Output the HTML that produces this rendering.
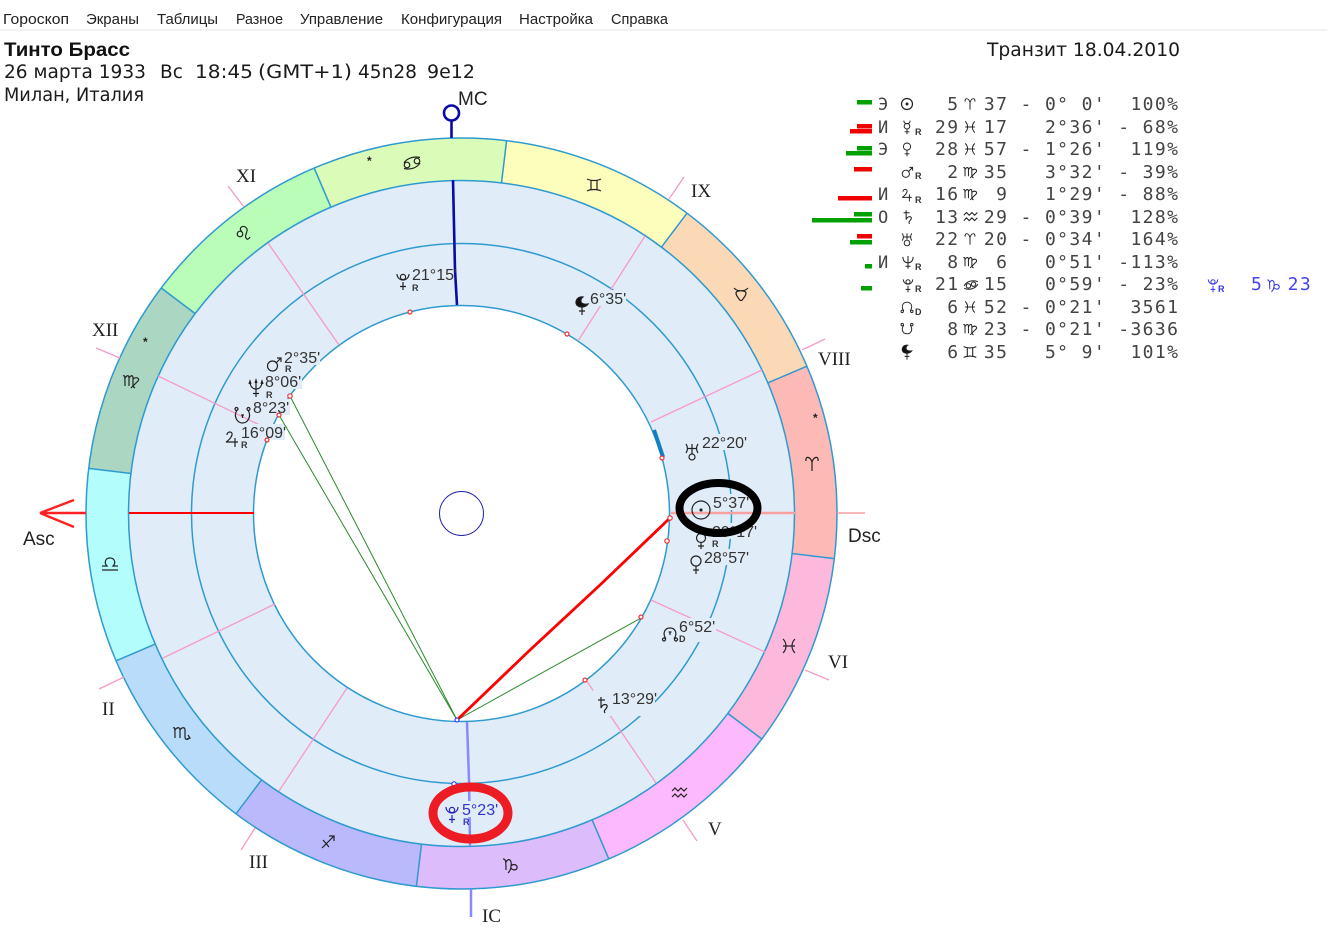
<!DOCTYPE html>
<html lang="ru"><head><meta charset="utf-8"><title>Тинто Брасс</title>
<style>
html,body{margin:0;padding:0;background:#fff;width:1335px;height:932px;overflow:hidden}
svg{display:block;position:absolute;left:0;top:0}
.m{font:14.5px "Liberation Sans",sans-serif;fill:#222}
.h{font:18.5px "DejaVu Sans",sans-serif;fill:#1a1a1a}
.s{font:19px "Liberation Serif",serif;fill:#222}
.a{font:19px "Liberation Sans",sans-serif;fill:#222}
.d{font:16px "Liberation Sans",sans-serif;fill:#333}
.t{font:18px "DejaVu Sans Mono",monospace;fill:#444;letter-spacing:1.38px;white-space:pre}
.g{fill:none;stroke:#222;stroke-width:1.2}
.r{font:bold 9px "Liberation Sans",sans-serif;fill:#333}
.c{fill:none;stroke:#2f9ad0;stroke-width:1.5}
.pk{stroke:#f79ac8;stroke-width:1.3}
.sec{fill:none;stroke-width:42.5;stroke-dasharray:185.49 2040}
</style></head><body>
<svg width="1335" height="932" viewBox="0 0 1335 932" xmlns="http://www.w3.org/2000/svg">
<rect x="0" y="29" width="1335" height="2" fill="#f2f2f2"/>
<g class="m">
<text x="3" y="24" textLength="66" lengthAdjust="spacingAndGlyphs">Гороскоп</text><text x="86" y="24" textLength="53" lengthAdjust="spacingAndGlyphs">Экраны</text><text x="157" y="24" textLength="61" lengthAdjust="spacingAndGlyphs">Таблицы</text><text x="236" y="24" textLength="47" lengthAdjust="spacingAndGlyphs">Разное</text><text x="300" y="24" textLength="83" lengthAdjust="spacingAndGlyphs">Управление</text><text x="401" y="24" textLength="101" lengthAdjust="spacingAndGlyphs">Конфигурация</text><text x="519" y="24" textLength="74" lengthAdjust="spacingAndGlyphs">Настройка</text><text x="611" y="24" textLength="57" lengthAdjust="spacingAndGlyphs">Справка</text>
</g>
<text x="4" y="56" textLength="126" lengthAdjust="spacingAndGlyphs" style="font:bold 19.5px 'Liberation Sans',sans-serif;fill:#111">Тинто Брасс</text>
<g class="h">
<text x="4" y="78" textLength="142" lengthAdjust="spacingAndGlyphs">26 марта 1933</text>
<text x="160" y="78">Вс</text>
<text x="195" y="78" textLength="58" lengthAdjust="spacingAndGlyphs">18:45</text>
<text x="258" y="78" textLength="94" lengthAdjust="spacingAndGlyphs">(GMT+1)</text>
<text x="358" y="78" textLength="59" lengthAdjust="spacingAndGlyphs">45n28</text>
<text x="427" y="78" textLength="48" lengthAdjust="spacingAndGlyphs">9e12</text>
<text x="4" y="101" textLength="140" lengthAdjust="spacingAndGlyphs">Милан, Италия</text>
<text x="987" y="56" textLength="193" lengthAdjust="spacingAndGlyphs">Транзит 18.04.2010</text>
</g>

<!-- wheel -->
<circle cx="461.5" cy="513.5" r="333" fill="#e0ecf8"/>
<g>
<circle class="sec" cx="461.5" cy="513.5" r="354.25" stroke="#fdb9b6" transform="rotate(336.9 461.5 513.5)"/>
<circle class="sec" cx="461.5" cy="513.5" r="354.25" stroke="#fdb9dc" transform="rotate(6.9 461.5 513.5)"/>
<circle class="sec" cx="461.5" cy="513.5" r="354.25" stroke="#fcb9fb" transform="rotate(36.9 461.5 513.5)"/>
<circle class="sec" cx="461.5" cy="513.5" r="354.25" stroke="#dcbcfb" transform="rotate(66.9 461.5 513.5)"/>
<circle class="sec" cx="461.5" cy="513.5" r="354.25" stroke="#b9b9fb" transform="rotate(96.9 461.5 513.5)"/>
<circle class="sec" cx="461.5" cy="513.5" r="354.25" stroke="#b9dcfb" transform="rotate(126.9 461.5 513.5)"/>
<circle class="sec" cx="461.5" cy="513.5" r="354.25" stroke="#b4fdfd" transform="rotate(156.9 461.5 513.5)"/>
<circle class="sec" cx="461.5" cy="513.5" r="354.25" stroke="#aad6c2" transform="rotate(186.9 461.5 513.5)"/>
<circle class="sec" cx="461.5" cy="513.5" r="354.25" stroke="#b9fdb9" transform="rotate(216.9 461.5 513.5)"/>
<circle class="sec" cx="461.5" cy="513.5" r="354.25" stroke="#dbfcb9" transform="rotate(246.9 461.5 513.5)"/>
<circle class="sec" cx="461.5" cy="513.5" r="354.25" stroke="#fdfdbc" transform="rotate(276.9 461.5 513.5)"/>
<circle class="sec" cx="461.5" cy="513.5" r="354.25" stroke="#fcd9b6" transform="rotate(306.9 461.5 513.5)"/>
</g>
<g stroke="#2f9ad0" stroke-width="1.5">
<line x1="834.3" y1="558.6" x2="792.1" y2="553.5"/>
<line x1="761.8" y1="739" x2="727.8" y2="713.4"/>
<line x1="608.8" y1="858.9" x2="592.1" y2="819.8"/>
<line x1="416.4" y1="886.3" x2="421.5" y2="844.1"/>
<line x1="236" y1="813.8" x2="261.6" y2="779.8"/>
<line x1="116.1" y1="660.8" x2="155.2" y2="644.1"/>
<line x1="88.7" y1="468.4" x2="130.9" y2="473.5"/>
<line x1="161.2" y1="288" x2="195.2" y2="313.6"/>
<line x1="314.2" y1="168.1" x2="330.9" y2="207.2"/>
<line x1="506.6" y1="140.7" x2="501.5" y2="182.9"/>
<line x1="687" y1="213.2" x2="661.4" y2="247.2"/>
<line x1="806.9" y1="366.2" x2="767.8" y2="382.9"/>
</g>
<circle class="c" cx="461.5" cy="513.5" r="375.5"/>
<circle class="c" cx="461.5" cy="513.5" r="333"/>
<circle class="c" cx="461.5" cy="513.5" r="270"/>
<circle cx="461.5" cy="513.5" r="208" fill="#fff" stroke="#2f9ad0" stroke-width="1.5"/>
<circle cx="461.5" cy="513.5" r="22" fill="none" stroke="#2222aa" stroke-width="1"/>

<!-- house cusps -->
<g class="pk">
<line x1="339" y1="345" x2="268" y2="243"/><line x1="244" y1="207" x2="228" y2="186"/>
<line x1="266" y1="428" x2="158" y2="376"/><line x1="120" y1="358" x2="96" y2="348"/>
<line x1="275" y1="604" x2="163" y2="658"/><line x1="124" y1="677" x2="99" y2="689"/>
<line x1="347" y1="688" x2="279" y2="791"/><line x1="255" y1="828" x2="241" y2="850"/>
<line x1="586" y1="680" x2="656" y2="783"/><line x1="683" y1="820" x2="697" y2="841"/>
<line x1="651" y1="600" x2="765" y2="652"/><line x1="805" y1="670" x2="829" y2="680"/>
<line x1="651" y1="422" x2="762" y2="370"/><line x1="802" y1="350" x2="825" y2="339"/>
<line x1="578" y1="341" x2="645" y2="236"/><line x1="669" y1="199" x2="684" y2="177"/>
</g>

<!-- label backgrounds hide rings and cusps beneath the text -->
<g fill="#e0ecf8">
<rect x="412" y="266" width="44" height="16"/><rect x="590" y="290" width="36" height="16"/>
<rect x="284" y="349" width="36" height="16"/><rect x="265" y="373" width="37" height="16"/>
<rect x="253" y="399" width="37" height="16"/><rect x="241" y="424" width="44" height="16"/>
<rect x="702" y="434" width="44" height="16"/><rect x="713" y="494" width="36" height="16"/>
<rect x="712" y="523" width="44" height="16"/><rect x="704" y="549" width="44" height="16"/>
<rect x="661" y="618" width="55" height="24"/><rect x="593" y="690" width="62" height="26"/>
</g>

<line x1="129" y1="513" x2="254" y2="513" stroke="#f00" stroke-width="2"/>
<path d="M86 513H40M40 513L74 500M40 513L74 527" fill="none" stroke="#f22" stroke-width="2.4"/>
<line x1="671" y1="513" x2="795" y2="513" stroke="#f9a0a0" stroke-width="2.5"/>
<line x1="837" y1="513" x2="865" y2="513" stroke="#f9a0a0" stroke-width="1.5"/>
<path d="M453 180L455 270L457 305" fill="none" stroke="#0a0aa8" stroke-width="2.6"/>
<path d="M451.5 138V121" fill="none" stroke="#0a0aa8" stroke-width="2.6"/>
<circle cx="451.5" cy="113" r="7.5" fill="#fff" stroke="#0a0aa8" stroke-width="2.6"/>
<path d="M467 722L469 780L470 846" fill="none" stroke="#8888ff" stroke-width="2.5"/>
<rect x="462" y="801" width="36" height="16" fill="#e0ecf8"/>
<line x1="471" y1="889" x2="471" y2="917" stroke="#8888ff" stroke-width="2.5"/>
<g fill="none">
<line x1="457" y1="720" x2="290" y2="396" stroke="#2a8a2a" stroke-width="1"/>
<line x1="457" y1="720" x2="279" y2="415" stroke="#2a8a2a" stroke-width="1"/>
<line x1="457" y1="720" x2="641" y2="618" stroke="#2a8a2a" stroke-width="1"/>
<path d="M458 719L530 650L600 585L670 518" stroke="#f00" stroke-width="2.8"/>
<path d="M654 430L663 457" stroke="#1080c0" stroke-width="4"/>
<g stroke="#f03030" stroke-width="1.2" fill="#fff">
<circle cx="410" cy="312" r="2"/><circle cx="567" cy="334" r="2"/><circle cx="290" cy="396" r="2.2"/><circle cx="279" cy="415" r="2"/><circle cx="267" cy="440" r="2"/><circle cx="662" cy="458" r="2"/><circle cx="670" cy="518" r="2.2"/><circle cx="667" cy="541" r="2.2"/><circle cx="641" cy="617" r="2"/><circle cx="585" cy="680" r="2"/>
</g>
<circle cx="457" cy="720" r="2" stroke="#22f" fill="#fff"/>
<circle cx="454" cy="784" r="2.2" stroke="#22f" fill="#fff"/>
</g>

<!-- labels -->
<g class="s"><text x="236" y="182">XI</text><text x="92" y="336">XII</text><text x="691" y="197">IX</text><text x="818" y="365">VIII</text><text x="828" y="668">VI</text><text x="708" y="835">V</text><text x="249" y="868">III</text><text x="102" y="715">II</text><text x="482" y="922">IC</text></g>
<g class="a"><text x="458" y="105">MC</text><text x="23" y="545">Asc</text><text x="848" y="542">Dsc</text></g>

<!-- zodiac glyphs on wheel -->
<g class="g">
<g transform="translate(412,163)"><circle cx="-5" cy="2" r="2.8"/><circle cx="5" cy="-2" r="2.8"/><path d="M-8 0C-5-5 2-7 8-5.500M8 0C5 5-2 7-8 5.500"/></g>
<path transform="translate(594,185)" d="M-7-6C-3-4 3-4 7-6M-7 6C-3 4 3 4 7 6M-3-5V5M3-5V5"/>
<g transform="translate(741,294)"><path d="M-5-1C-5-4 5-4 5-1C5 2 3 3 2 5C1 7-1 7-2 5C-3 3-5 2-5-1ZM-7-6C-5-4-3-3-1-3.500M7-6C5-4 3-3 1-3.500"/></g>
<path transform="translate(812,464)" d="M-6-3C-7-8-2-8 0-2V7M6-3C7-8 2-8 0-2"/>
<path transform="translate(789,646)" d="M-6-7C-2-3-2 3-6 7M6-7C2-3 2 3 6 7M-6 0H6"/>
<path transform="translate(680,793)" d="M-8-2L-5-5L-2-2L1-5L4-2L7-5M-8 4L-5 1L-2 4L1 1L4 4L7 1"/>
<path transform="translate(511,865)" d="M-8-6C-5-6-5-3-5 5M-5-3C-3-7 1-6 0 1C0 5-2 7-3 8M0 1C2-2 7 0 6 3C5 6 1 5 0 3"/>
<path transform="translate(328,842)" d="M-6 6L6-6M1-6H6V-1M-5-2L1 5"/>
<path transform="translate(182,733)" d="M-9-5C-7-6-7-5-7 5M-7-3C-5-6-2-6-2-3V5M-2-3C0-6 3-6 3-3V4C3 7 6 7 7 5M6 2L8 5L5 6"/>
<path transform="translate(110,564)" d="M-8 6H8M-8 2H-3C-6-1-5-6 0-6C5-6 6-1 3 2H8"/>
<path transform="translate(132,381)" d="M-9-5C-7-6-7-5-7 5M-7-3C-5-6-3-6-3-3V5M-3-3C-1-6 1-6 1-3V4C1 6 3 7 3 7M1-2C5-5 8-2 6 0L-1 7"/>
<g transform="translate(243,233)"><circle cx="-3" cy="1" r="2.8"/><path d="M-1-1C-6-6 2-9 4-4C5-1 1 3 3 5C4 7 6 6 7 4"/></g>
</g>
<g style="font:bold 12px 'Liberation Sans',sans-serif" fill="#222"><text x="367" y="165">*</text><text x="143" y="346">*</text><text x="813" y="422">*</text></g>

<!-- chart planets -->
<g class="d">
<text x="412" y="280">21°15'</text><text x="590" y="304">6°35'</text><text x="284" y="363">2°35'</text><text x="265" y="387">8°06'</text><text x="253" y="413">8°23'</text><text x="241" y="438">16°09'</text><text x="702" y="448">22°20'</text><text x="712" y="537">29°17'</text><text x="704" y="563">28°57'</text><text x="679" y="632">6°52'</text><text x="612" y="704">13°29'</text>
<text x="713" y="508">5°37'</text>
<text x="462" y="815" style="fill:#3333cc">5°23'</text>
</g>
<g class="g">
<g transform="translate(403,281)"><circle cy="-4" r="2.6"/><path d="M-6-7A6 6 0 0 0 6-7M0 1V9M-3 5.500H3"/></g>
<path transform="translate(582,303)" d="M1-6C-6-7-8 1-4 3C-1 5 4 4 6 1C2 2-2 0-1-3C-1-5 0-5 1-6Z" fill="#111"/>
<path transform="translate(582,303)" d="M0 4V12M-3 8H3"/>
<g transform="translate(274,365)"><circle cx="-1.500" cy="1" r="5"/><path d="M2-2L7-7M3-7H7V-3"/></g>
<path transform="translate(256,388)" d="M-7-4L-6-7L-5-4M-6-7C-6-1-3 1 0 1C3 1 6-1 6-7M5-4L6-7L7-4M-1-5L0-8L1-5M0-8V9M-3 5.500H3"/>
<g transform="translate(242.500,415)"><circle cx="-6" cy="-6" r="1.500"/><circle cx="6" cy="-6" r="1.500"/><path d="M-6-4C-9 2-5 8 0 8C5 8 9 2 6-4M-1.500 0H1.500M0 0V3"/></g>
<path transform="translate(232,439)" d="M-5-4C-5-8 1-8 0-4C-1-1-4 2-6 3H6M3-1V8"/>
<g transform="translate(692,451)"><circle cy="6" r="3"/><path d="M-6-7C-4-4-4-1-6 2M6-7C4-4 4-1 6 2M-5-2.500H5M0-7V3"/></g>
<g transform="translate(701,510)"><circle r="9"/><circle r="1" fill="#222"/></g>
<g transform="translate(701,540)"><circle cy="-2" r="4.500"/><path d="M0 3V9M-3 6H3"/></g>
<g transform="translate(696,564)"><circle cy="-3" r="5"/><path d="M0 2V10M-3 6H3"/></g>
<g transform="translate(670,634)"><path d="M-4 5C-8-1-5-6 0-6C5-6 8-1 4 5M-1.500-2H1.500M0-2V1"/><circle cx="-6" cy="5.500" r="1.500"/><circle cx="6" cy="5.500" r="1.500"/></g>
<path transform="translate(602,705)" d="M-4-5H3M-1-8V3C1-2 6-1 5 2C4 5 1 5 3 8"/>
</g>
<g class="r"><text x="412" y="291">R</text><text x="285" y="372">R</text><text x="266" y="398">R</text><text x="241" y="448">R</text><text x="712" y="547">R</text><text x="679" y="642">D</text><text x="463" y="825" style="fill:#3333cc">R</text></g>
<g fill="none" stroke="#2222bb" stroke-width="1.200" transform="translate(452,814)"><circle cy="-4" r="2.600"/><path d="M-6-7A6 6 0 0 0 6-7M0 1V9M-3 5.500H3"/></g>

<!-- highlight ellipses -->
<ellipse cx="718.500" cy="508" rx="39" ry="25" fill="none" stroke="#000" stroke-width="8"/>
<ellipse cx="470.500" cy="813" rx="37.500" ry="26" fill="none" stroke="#ed1c24" stroke-width="9"/>

<!-- table bars -->
<g fill="#00a000">
<rect x="857" y="100" width="15" height="4.500"/>
<rect x="857" y="146" width="15" height="4.500"/><rect x="846" y="151" width="26" height="4.500"/>
<rect x="854" y="212" width="18" height="4.500"/><rect x="812" y="218" width="60" height="4.500"/>
<rect x="850" y="240" width="22" height="4.500"/>
<rect x="865" y="264" width="7" height="4.500"/><rect x="861" y="286" width="11" height="4.500"/>
</g>
<g fill="#f00000">
<rect x="857" y="124" width="15" height="4.500"/><rect x="850" y="129" width="22" height="4.500"/>
<rect x="854" y="167" width="18" height="4.500"/><rect x="838" y="196" width="34" height="4.500"/>
<rect x="857" y="234" width="15" height="4.500"/>
</g>
<g class="t" style="font-size:17px;letter-spacing:0">
<text x="878" y="110">Э</text><text x="878" y="133">И</text><text x="878" y="155">Э</text><text x="878" y="200">И</text><text x="878" y="223">О</text><text x="878" y="268">И</text>
</g>

<!-- table text -->
<g class="t" xml:space="preserve">
<text x="935" y="110" xml:space="preserve"> 5  37 - 0° 0'  100%</text>
<text x="935" y="133" xml:space="preserve">29  17   2°36' - 68%</text>
<text x="935" y="155" xml:space="preserve">28  57 - 1°26'  119%</text>
<text x="935" y="178" xml:space="preserve"> 2  35   3°32' - 39%</text>
<text x="935" y="200" xml:space="preserve">16   9   1°29' - 88%</text>
<text x="935" y="223" xml:space="preserve">13  29 - 0°39'  128%</text>
<text x="935" y="245" xml:space="preserve">22  20 - 0°34'  164%</text>
<text x="935" y="268" xml:space="preserve"> 8   6   0°51' -113%</text>
<text x="935" y="290" xml:space="preserve">21  15   0°59' - 23%</text>
<text x="935" y="313" xml:space="preserve"> 6  52 - 0°21'  3561</text>
<text x="935" y="335" xml:space="preserve"> 8  23 - 0°21' -3636</text>
<text x="935" y="358" xml:space="preserve"> 6  35   5° 9'  101%</text>
<text x="1251" y="290" xml:space="preserve" style="fill:#4444ee">5  23 -</text>
</g>

<!-- table planet glyphs -->
<g class="g">
<g transform="translate(907,104)"><circle r="5.500"/><circle r=".9" fill="#222"/></g>
<g transform="translate(907,127) scale(.8)"><circle cy="-1" r="3.500"/><path d="M-4-8A4 4 0 0 0 4-8M0 3V9M-3 6H3"/></g>
<g transform="translate(907,149) scale(.8)"><circle cy="-3" r="4.500"/><path d="M0 2V9M-3 6H3"/></g>
<g transform="translate(907,173) scale(.8)"><circle cx="-1.500" cy="1" r="4.500"/><path d="M2-2L7-7M3-7H7V-3"/></g>
<path transform="translate(907,195) scale(.8)" d="M-5-4C-5-8 1-8 0-4C-1-1-4 2-6 3H6M3-1V8"/>
<path transform="translate(907,217) scale(.85)" d="M-4-5H3M-1-8V3C1-2 6-1 5 2C4 5 1 5 3 8"/>
<g transform="translate(907,239) scale(.8)"><circle cy="5" r="3.500"/><path d="M-6-7C-4-4-4-1-6 2M6-7C4-4 4-1 6 2M-5-2.500H5M0-7V1"/></g>
<path transform="translate(908,262) scale(.85)" d="M-6-6C-6-1-3 1 0 1C3 1 6-1 6-6M0-7V8M-3 5H3"/>
<g transform="translate(908,285) scale(.8)"><circle cy="-4" r="2.600"/><path d="M-6-7A6 6 0 0 0 6-7M0 1V9M-3 5.500H3"/></g>
<g transform="translate(907,307) scale(.8)"><path d="M-4 5C-8-1-5-6 0-6C5-6 8-1 4 5"/><circle cx="-6" cy="5.500" r="1.500"/><circle cx="6" cy="5.500" r="1.500"/></g>
<g transform="translate(907,329) scale(.8)"><path d="M-4-5C-8 1-5 6 0 6C5 6 8 1 4-5"/><circle cx="-6" cy="-5.500" r="1.500"/><circle cx="6" cy="-5.500" r="1.500"/></g>
<g transform="translate(907,350) scale(.8)"><path d="M1-6C-6-7-8 1-4 3C-1 5 4 4 6 1C2 2-2 0-1-3C-1-5 0-5 1-6Z" fill="#111"/><path d="M0 4V12M-3 8H3"/></g>
</g>
<g class="r"><text x="915" y="135">R</text><text x="915" y="179">R</text><text x="915" y="203">R</text><text x="915" y="270">R</text><text x="915" y="292">R</text><text x="915" y="315">D</text></g>

<!-- table sign glyphs -->
<g class="g">
<path transform="translate(970,104) scale(.8)" d="M-6-3C-7-8-2-8 0-2V7M6-3C7-8 2-8 0-2"/>
<path transform="translate(970,127) scale(.8)" d="M-6-7C-2-3-2 3-6 7M6-7C2-3 2 3 6 7M-6 0H6"/>
<path transform="translate(970,149) scale(.8)" d="M-6-7C-2-3-2 3-6 7M6-7C2-3 2 3 6 7M-6 0H6"/>
<path transform="translate(971,172) scale(.85)" d="M-9-5C-7-6-7-5-7 5M-7-3C-5-6-3-6-3-3V5M-3-3C-1-6 1-6 1-3V4C1 6 3 7 3 7M1-2C5-5 8-2 6 0L-1 7"/>
<path transform="translate(971,194) scale(.85)" d="M-9-5C-7-6-7-5-7 5M-7-3C-5-6-3-6-3-3V5M-3-3C-1-6 1-6 1-3V4C1 6 3 7 3 7M1-2C5-5 8-2 6 0L-1 7"/>
<path transform="translate(971,217) scale(.9)" d="M-8-2L-5-5L-2-2L1-5L4-2L7-5M-8 4L-5 1L-2 4L1 1L4 4L7 1"/>
<path transform="translate(970,239) scale(.8)" d="M-6-3C-7-8-2-8 0-2V7M6-3C7-8 2-8 0-2"/>
<path transform="translate(971,262) scale(.85)" d="M-9-5C-7-6-7-5-7 5M-7-3C-5-6-3-6-3-3V5M-3-3C-1-6 1-6 1-3V4C1 6 3 7 3 7M1-2C5-5 8-2 6 0L-1 7"/>
<g transform="translate(971,285) scale(.85)"><circle cx="-3" cy="1" r="2.600"/><circle cx="3" cy="-1" r="2.600"/><path d="M-8 1C-5-5 3-6 8-4M8-1C5 5-3 6-8 4"/></g>
<path transform="translate(970,307) scale(.8)" d="M-6-7C-2-3-2 3-6 7M6-7C2-3 2 3 6 7M-6 0H6"/>
<path transform="translate(971,329) scale(.85)" d="M-9-5C-7-6-7-5-7 5M-7-3C-5-6-3-6-3-3V5M-3-3C-1-6 1-6 1-3V4C1 6 3 7 3 7M1-2C5-5 8-2 6 0L-1 7"/>
<path transform="translate(970,352) scale(.9)" d="M-7-6C-3-4 3-4 7-6M-7 6C-3 4 3 4 7 6M-3-5V5M3-5V5"/>
</g>

<!-- transit blue glyphs -->
<g fill="none" stroke="#3333ee" stroke-width="1.200">
<g transform="translate(1213,285) scale(.8)"><circle cy="-4" r="2.600"/><path d="M-6-7A6 6 0 0 0 6-7M0 1V9M-3 5.500H3"/></g>
<path transform="translate(1274,285) scale(.85)" d="M-8-6C-5-6-5-3-5 5M-5-3C-3-7 1-6 0 1C0 5-2 7-3 8M0 1C2-2 7 0 6 3C5 6 1 5 0 3"/>
</g>
<text x="1218" y="292" class="r" style="fill:#3333ee">R</text>
<rect x="1327" y="0" width="8" height="932" fill="#fff"/>
</svg>
</body></html>
